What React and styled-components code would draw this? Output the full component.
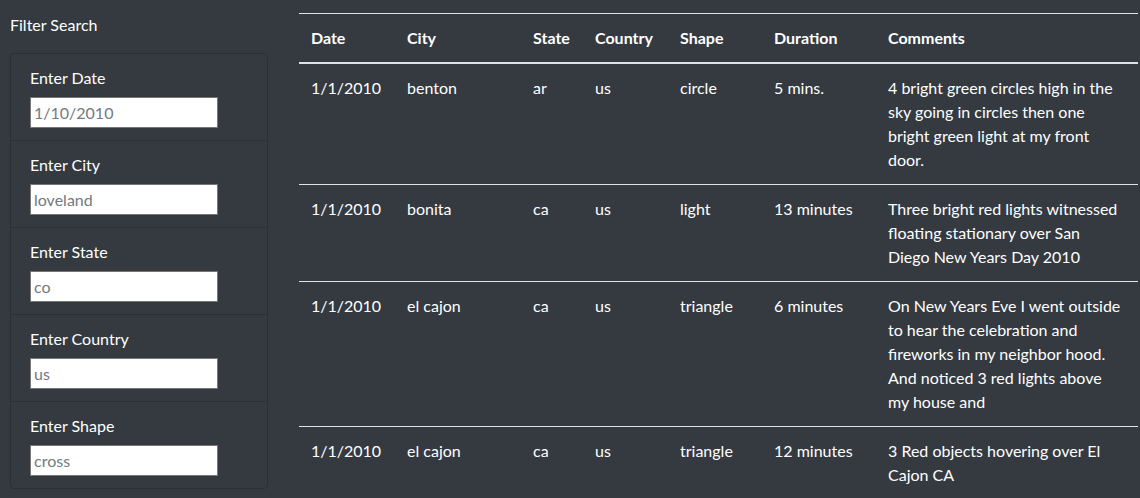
import styled, { createGlobalStyle } from 'styled-components';

const GlobalStyle = createGlobalStyle`
	body {
		margin: 0;
		background: #343a40;
		color: #fff;
		font-family: 'Lato', 'Liberation Sans', sans-serif;
		font-size: 16px;
		line-height: 24px;
	}
`;

const Page = styled.div`
	display: flex;
	align-items: flex-start;
	gap: 31px;
	padding: 13px 2px 0 10px;
	height: 498px;
	box-sizing: border-box;
	overflow: hidden;
`;

const Sidebar = styled.aside`
	width: 258px;
	flex: none;
`;

const SideTitle = styled.h5`
	margin: 0 0 16px;
	font-size: 16px;
	font-weight: 400;
	line-height: 24px;
`;

const FilterList = styled.ul`
	list-style: none;
	margin: 0;
	padding: 0;
	border: 1px solid rgba(0, 0, 0, 0.16);
	border-radius: 4px;
`;

const FilterItem = styled.li`
	padding: 12px 19px;
	& + & {
		border-top: 1px solid rgba(0, 0, 0, 0.16);
	}
`;

const Label = styled.label`
	display: block;
	margin-bottom: 7px;
`;

const Input = styled.input`
	display: block;
	width: 188px;
	height: 31px;
	box-sizing: border-box;
	border: 1px solid #767676;
	padding: 1px 3px;
	font-family: inherit;
	font-size: 16px;
	color: #333;
	&::placeholder {
		color: #737980;
	}
`;

const Table = styled.table`
	width: 839px;
	table-layout: fixed;
	border-collapse: collapse;
	color: #fff;
`;

const Th = styled.th`
	text-align: left;
	font-weight: 700;
	padding: 12px;
	border-top: 1px solid #dee2e6;
	border-bottom: 2px solid #dee2e6;
	vertical-align: bottom;
`;

const Td = styled.td`
	padding: 12px;
	vertical-align: top;
	border-top: ${props => (props.first ? 'none' : '1px solid #dee2e6')};
	&:last-child {
		padding-right: 16px;
	}
`;

const filters = [
	{ id: 'datetime', label: 'Enter Date', placeholder: '1/10/2010' },
	{ id: 'city', label: 'Enter City', placeholder: 'loveland' },
	{ id: 'state', label: 'Enter State', placeholder: 'co' },
	{ id: 'country', label: 'Enter Country', placeholder: 'us' },
	{ id: 'shape', label: 'Enter Shape', placeholder: 'cross' },
];

const columns = [
	['Date', 96],
	['City', 126],
	['State', 62],
	['Country', 85],
	['Shape', 94],
	['Duration', 114],
	['Comments', 262],
];

const sightings = [
	['1/1/2010', 'benton', 'ar', 'us', 'circle', '5 mins.', '4 bright green circles high in the sky going in circles then one bright green light at my front door.'],
	['1/1/2010', 'bonita', 'ca', 'us', 'light', '13 minutes', 'Three bright red lights witnessed floating stationary over San Diego New Years Day 2010'],
	['1/1/2010', 'el cajon', 'ca', 'us', 'triangle', '6 minutes', 'On New Years Eve I went outside to hear the celebration and fireworks in my neighbor hood. And noticed 3 red lights above my house and'],
	['1/1/2010', 'el cajon', 'ca', 'us', 'triangle', '12 minutes', '3 Red objects hovering over El Cajon CA'],
];

function App() {
	return (
		<>
			<GlobalStyle />
			<Page>
				<Sidebar>
					<SideTitle>Filter Search</SideTitle>
					<FilterList>
						{filters.map(f => (
							<FilterItem key={f.id}>
								<Label htmlFor={f.id}>{f.label}</Label>
								<Input id={f.id} type='text' placeholder={f.placeholder} />
							</FilterItem>
						))}
					</FilterList>
				</Sidebar>
				<Table>
					<colgroup>
						{columns.map(([name, w]) => (
							<col key={name} style={{ width: w }} />
						))}
					</colgroup>
					<thead>
						<tr>
							{columns.map(([name]) => (
								<Th key={name}>{name}</Th>
							))}
						</tr>
					</thead>
					<tbody>
						{sightings.map((row, i) => (
							<tr key={i}>
								{row.map((cell, j) => (
									<Td key={j} first={i === 0}>
										{cell}
									</Td>
								))}
							</tr>
						))}
					</tbody>
				</Table>
			</Page>
		</>
	);
}

export default App;
